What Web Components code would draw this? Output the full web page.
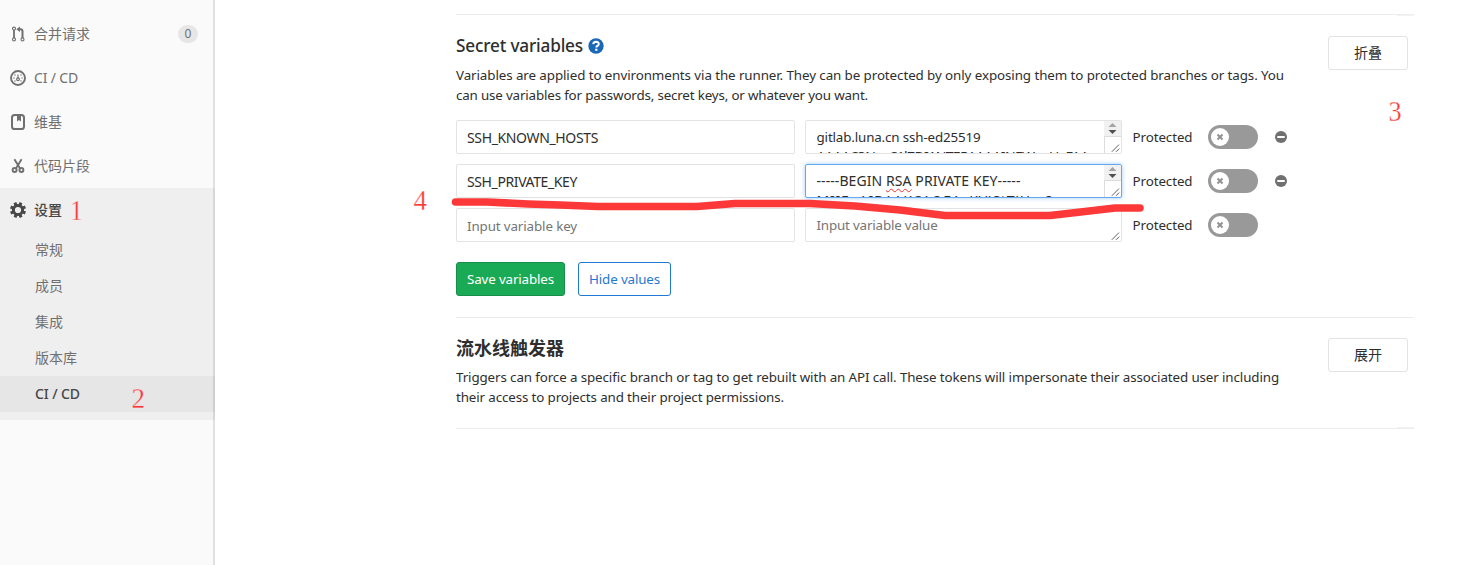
<!DOCTYPE html>
<html lang="zh-CN">
<head>
<meta charset="utf-8">
<title>CI / CD</title>
<style>
html,body{margin:0;height:100%;background:#fff;overflow:hidden}
body{font:14px/20px "Noto Sans","Noto Sans CJK SC",sans-serif;color:#2e2e2e}
</style>
</head>
<body>
<settings-page></settings-page>
<script>
const define = (name, html, setup) => customElements.define(name, class extends HTMLElement {
  connectedCallback() {
    if (this.shadowRoot) return;
    this.attachShadow({mode: 'open'}).innerHTML = html;
    if (setup) setup(this, this.shadowRoot);
  }
});

/* One line of text tracked so that it spans exactly `w` pixels. */
define('fit-text', `<style>:host{display:inline-block;white-space:pre;vertical-align:top;font-size:.955em}:host([caps]){font-size:1em}span{display:inline-block}</style><span><slot></slot></span>`,
(host, root) => {
  const s = root.querySelector('span'), w = +host.getAttribute('w');
  const n = host.textContent.length, now = s.getBoundingClientRect().width;
  if (w && now) s.style.letterSpacing = ((w - now) / n) + 'px';
});

const ICONS = {
  merge: '<svg width="16" height="16" viewBox="0 0 16 16" fill="none" stroke="currentColor"><circle cx="4" cy="2.6" r="1.5" stroke-width="1.1"/><circle cx="4" cy="13.4" r="1.5" stroke-width="1.1"/><circle cx="12.5" cy="13.4" r="1.5" stroke-width="1.1"/><path d="M4 4v8" stroke-width="1.8"/><path d="M8.5 3.3h2q2 0 2 2V12" stroke-width="2"/><path d="M10 .6v5.4L6.3 3.3z" fill="currentColor" stroke="none"/></svg>',
  gauge: '<svg width="16" height="16" viewBox="0 0 16 16" fill="none" stroke="currentColor"><circle cx="8" cy="8" r="7" stroke-width="1.9"/><path d="M8 4.4v4" stroke-width="1.1"/><circle cx="8" cy="9.3" r="1.4" stroke-width="1.2"/><g fill="currentColor" stroke="none"><circle cx="4" cy="8" r=".7"/><circle cx="12" cy="8" r=".7"/><circle cx="5" cy="5" r=".7"/><circle cx="11" cy="5" r=".7"/><circle cx="5" cy="11" r=".7"/><circle cx="11" cy="11" r=".7"/></g></svg>',
  book: '<svg width="16" height="16" viewBox="0 0 16 16"><rect x="2" y="1" width="12" height="14" rx="2.6" fill="none" stroke="currentColor" stroke-width="2"/><path d="M7 1h4v6.6L9 6 7 7.6z" fill="currentColor"/></svg>',
  cut: '<svg width="16" height="16" viewBox="0 0 16 16" fill="none" stroke="currentColor"><path d="M4.4 1.2 9.8 10M11.6 1.2 6.2 10" stroke-width="1.9"/><circle cx="4.6" cy="12" r="2" stroke-width="1.9"/><circle cx="11.4" cy="12" r="2" stroke-width="1.9"/></svg>',
  gear: '<svg width="16" height="16" viewBox="0 0 16 16"><g fill="currentColor"><path d="M6.5 0h3v3h-3zM6.5 13h3v3h-3zM0 6.5h3v3H0zM13 6.5h3v3h-3z" transform="rotate(22 8 8)"/><path d="M6.5 0h3v3h-3zM6.5 13h3v3h-3zM0 6.5h3v3H0zM13 6.5h3v3h-3z" transform="rotate(67 8 8)"/></g><circle cx="8" cy="8" r="4.6" fill="none" stroke="currentColor" stroke-width="3"/></svg>'
};

define('nav-item', `<style>
:host{display:flex;align-items:center;height:44px;padding:0 17px 0 10px;color:#707070}
:host([active]){color:#474747;font-weight:500}
i{display:flex;width:16px;margin-right:8px}
b{margin-left:auto;width:20px;height:18px;line-height:18px;border-radius:9px;background:#e6e6e6;font-size:12px;font-weight:400;text-align:center}
</style><i></i><slot></slot>`, (h, r) => {
  r.querySelector('i').innerHTML = ICONS[h.getAttribute('icon')];
  if (h.hasAttribute('count')) { const b = document.createElement('b'); b.textContent = h.getAttribute('count'); r.append(b); }
});
define('nav-sub', `<style>
:host{display:flex;align-items:center;height:36px;padding-left:35px;color:#707070}
:host([active]){background:#e6e6e6;color:#474747;font-weight:500}
</style><slot></slot>`);

define('side-bar', `<style>
:host{display:block;box-sizing:border-box;width:215px;height:565px;padding-top:12px;background:#fafafa;box-shadow:inset -2px 0 0 #e1e1e1}
section{height:232px;background:#efefef;box-shadow:inset -2px 0 0 #d7d7d7}
nav-sub[active]{box-shadow:inset -2px 0 0 #cfcfcf}
</style>
<nav-item icon="merge" count="0">合并请求</nav-item>
<nav-item icon="gauge"><fit-text caps w="44">CI / CD</fit-text></nav-item>
<nav-item icon="book">维基</nav-item>
<nav-item icon="cut">代码片段</nav-item>
<section><nav-item icon="gear" active>设置</nav-item>
<nav><nav-sub>常规</nav-sub><nav-sub>成员</nav-sub><nav-sub>集成</nav-sub><nav-sub>版本库</nav-sub><nav-sub active><fit-text caps w="45">CI / CD</fit-text></nav-sub></nav></section>`);

define('ui-button', `<style>
:host{display:flex;box-sizing:border-box;height:34px;align-items:center;justify-content:center;border:1px solid #e3e3e3;border-radius:3px;background:#fff}
:host([kind=success]){background:#1aaa55;border-color:#168f48;color:#fff}
:host([kind=outline]){border-color:#1f78d1;color:#1f78d1}
</style><slot></slot>`);

define('text-field', `<style>
:host{display:block;box-sizing:border-box;height:34px;border:1px solid #e3e3e3;border-radius:2px;padding:7px 10px;background:#fff;overflow:hidden}
:host([placeholder]){color:#757575}
</style><slot></slot>`);

define('text-area', `<style>
:host{display:flex;box-sizing:border-box;height:34px;border:1px solid #e3e3e3;border-radius:2px;background:#fff;overflow:hidden}
:host([focused]){border-color:#65a9ec;box-shadow:0 0 4px rgba(78,160,240,.55)}
:host([placeholder]){color:#757575}
div{flex:1;padding:6px 0 0 10.5px;height:26px;overflow:hidden;white-space:pre}
aside{display:flex;flex-direction:column;width:17px}
.bar{background:#f1f1f1;height:15px;border-bottom:1px solid #dcdcdc}
.grip{flex:1;display:flex;align-items:flex-end;justify-content:flex-end}
:host([scroll]) .grip{border-left:1px solid #dcdcdc}
:host(:not([scroll])) .bar{visibility:hidden}
svg{display:block}
</style><div><slot></slot></div><aside>
<span class="bar"><svg width="17" height="15" viewBox="0 0 17 15"><path d="M4.500 6h8l-4-4z" fill="#a3a3a3"/><path d="M4.500 9h8l-4 4z" fill="#505050"/></svg></span>
<span class="grip"><svg width="10" height="10" viewBox="0 0 10 10"><path d="M.8 8.800 8 1.600M5 8.800 8.200 5.600" stroke="#606060" fill="none"/></svg></span></aside>`);

define('toggle-switch', `<style>
:host{display:flex;box-sizing:border-box;width:50px;height:24px;padding:3px;border-radius:12px;background:#999}
span{display:flex;align-items:center;justify-content:center;width:18px;height:18px;border-radius:50%;background:#fff}
</style><span><svg width="8" height="8" viewBox="0 0 8 8"><path d="M1.500 1.500l5 5M6.500 1.500l-5 5" stroke="#929292" stroke-width="2"/></svg></span>`);

define('variable-row', `<style>
:host{display:grid;grid-template-columns:349px 317px 86px 50px auto;height:34px;align-items:center}
label{padding-left:10.5px}
svg{margin-left:17px;display:block}
:host([fresh]) svg{display:none}
.key{padding-right:10px}
</style><div class="key"><slot name="key"></slot></div><slot name="value"></slot>
<label><fit-text w="60">Protected</fit-text></label><toggle-switch></toggle-switch>
<svg width="12" height="12" viewBox="0 0 12 12"><circle cx="6" cy="6" r="6" fill="#707070"/><rect x="2.300" y="5" width="7.400" height="2" fill="#fff"/></svg>`);

define('settings-section', `<style>
:host{display:flex;box-sizing:border-box;width:958px;border-bottom:1px solid #ececec;align-items:flex-start}
main{width:860px;flex:none}
::slotted([slot=action]){margin:var(--action-top,20px) 0 0 12px;width:80px}
</style><main><slot></slot></main><slot name="action"></slot>`);

define('red-marks', `<style>
:host{position:absolute;left:0;top:0;width:1464px;height:565px;pointer-events:none}
svg{display:block}text{font-family:"Liberation Serif",serif;font-size:30px;fill:#fb3838;stroke:#fff;stroke-width:.3px}
.side{stroke:#efefef}
</style><svg width="1464" height="565" viewBox="0 0 1464 565">
<path d="M455.500 202H487L528 204L560 205L598 206.500H697L735 203.500H810L855 206L900 210L945 215.500H1050L1085 211.500L1115 208H1140" fill="none" stroke="#fc3838" stroke-width="7.500" stroke-linecap="round" stroke-linejoin="round"/>
<text class="side" transform="translate(70 220) scale(.85 1)">1</text><text class="side" transform="translate(131.500 408) scale(.9 1)">2</text><text transform="translate(1388.500 121) scale(.87 1)">3</text><text transform="translate(413.500 210) scale(.9 1)">4</text></svg>`);

define('settings-page', `<style>
:host{display:flex;position:relative;width:1464px;height:565px;overflow:hidden}
.content{padding:14px 0 0 241px}
.content::before{content:"";display:block;width:958px;height:1px;background:#ececec}
.secret{height:303px;--action-top:21px;background:linear-gradient(#f3f3f3,#f3f3f3) right top/17px 1px no-repeat}
.trigger{height:111px;background:linear-gradient(#f3f3f3,#f3f3f3) right bottom/17px 1px no-repeat}
h4{display:flex;align-items:center;margin:20px 0 8px;height:22px;font-size:18px;line-height:22px;font-weight:500}
h4 svg{margin-left:5px}
p{margin:0;height:40px;line-height:20px}
.rows{display:grid;gap:10px;margin-top:15px}
.actions{display:flex;gap:13px;margin-top:20px}
.save{width:109px}.hide{width:93px}
u{text-decoration:underline wavy #e33 1px;text-underline-offset:2px;text-decoration-skip-ink:none}
h4.zh{font-weight:700;margin:19px 0 8px}
</style>
<side-bar></side-bar>
<div class="content">
<settings-section class="secret">
<h4><fit-text w="127">Secret variables</fit-text><svg width="16" height="16" viewBox="0 0 16 16"><circle cx="8" cy="8" r="7.700" fill="#1b69b6"/><path d="M5.200 6.100Q5.300 3.800 8 3.700Q10.800 3.800 10.800 6Q10.700 7.300 9.300 8Q8.300 8.500 8.300 9.500" fill="none" stroke="#fff" stroke-width="2"/><rect x="7.200" y="10.700" width="2.200" height="2.100" fill="#fff"/></svg></h4>
<p><fit-text w="828">Variables are applied to environments via the runner. They can be protected by only exposing them to protected branches or tags. You</fit-text><br><fit-text w="412">can use variables for passwords, secret keys, or whatever you want.</fit-text></p>
<div class="rows">
<variable-row><text-field slot="key"><fit-text caps w="131">SSH_KNOWN_HOSTS</fit-text></text-field><text-area slot="value" scroll><fit-text w="164">gitlab.luna.cn ssh-ed25519</fit-text>
<fit-text caps w="272">AAAAC3NzaC1lZDI1NTE5AAAAINEWvpUxFAA</fit-text></text-area></variable-row>
<variable-row><text-field slot="key"><fit-text caps w="110">SSH_PRIVATE_KEY</fit-text></text-field><text-area slot="value" scroll focused><fit-text caps w="204">-----BEGIN <u>RSA</u> PRIVATE KEY-----</fit-text>
<fit-text caps w="237">MIIEpAIBAAKCAQEAyKVJStTJHm8</fit-text></text-area></variable-row>
<variable-row fresh><text-field slot="key" placeholder><fit-text w="110">Input variable key</fit-text></text-field><text-area slot="value" placeholder><fit-text w="121">Input variable value</fit-text></text-area></variable-row>
</div>
<div class="actions"><ui-button class="save" kind="success"><fit-text w="87">Save variables</fit-text></ui-button><ui-button class="hide" kind="outline"><fit-text w="71">Hide values</fit-text></ui-button></div>
<ui-button slot="action">折叠</ui-button>
</settings-section>
<settings-section class="trigger">
<h4 class="zh">流水线触发器</h4>
<p><fit-text w="823">Triggers can force a specific branch or tag to get rebuilt with an API call. These tokens will impersonate their associated user including</fit-text><br><fit-text w="328">their access to projects and their project permissions.</fit-text></p>
<ui-button slot="action">展开</ui-button>
</settings-section>
</div>
<red-marks></red-marks>`);
</script>
</body>
</html>
